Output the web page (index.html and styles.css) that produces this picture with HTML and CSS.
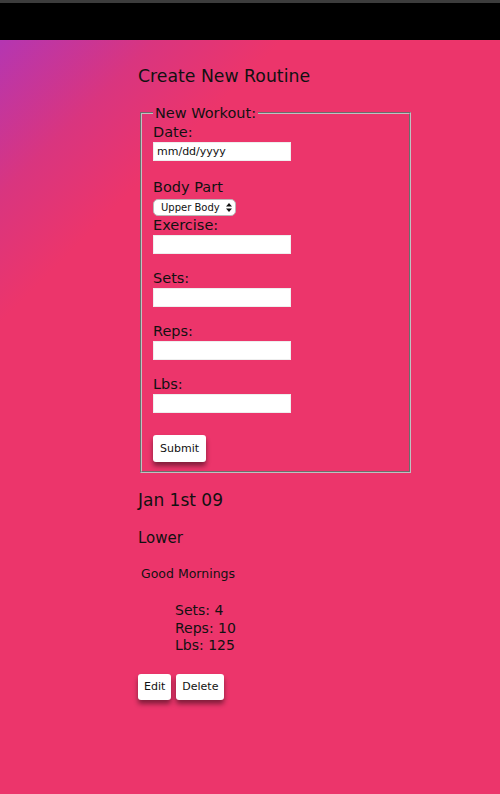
FILE: index.html
```html
<!DOCTYPE html>
<html>
<head>
<meta charset="utf-8">
<link rel="stylesheet" href="styles.css">
</head>
<body>
<div class="topbar"></div>
<main class="page">
  <div class="content">
    <h1 class="title">Create New Routine</h1>
    <form class="form">
      <fieldset class="box">
        <legend class="legend">New Workout:</legend>
        <div class="field field-first">
          <label class="label">Date:</label>
          <input class="input" type="text" placeholder="mm/dd/yyyy">
        </div>
        <div class="field field-tight">
          <label class="label">Body Part</label>
          <div class="select-wrap">
            <select class="select"><option>Upper Body</option><option>Lower Body</option></select>
            <svg class="select-arrows" width="6" height="9" viewBox="0 0 6 9"><path d="M3 0 L6 3.5 L0 3.5 Z M3 9 L6 5.5 L0 5.5 Z" fill="#111"/></svg>
          </div>
        </div>
        <div class="field">
          <label class="label">Exercise:</label>
          <input class="input" type="text">
        </div>
        <div class="field">
          <label class="label">Sets:</label>
          <input class="input" type="text">
        </div>
        <div class="field">
          <label class="label">Reps:</label>
          <input class="input" type="text">
        </div>
        <div class="field field-last">
          <label class="label">Lbs:</label>
          <input class="input" type="text">
        </div>
        <button class="btn btn-submit" type="button">Submit</button>
      </fieldset>
    </form>
    <section class="entry">
      <h2 class="date">Jan 1st 09</h2>
      <h3 class="part">Lower</h3>
      <h4 class="exercise">Good Mornings</h4>
      <ul class="stats">
        <li>Sets: 4</li>
        <li>Reps: 10</li>
        <li>Lbs: 125</li>
      </ul>
      <div class="actions">
        <button class="btn btn-sm" type="button">Edit</button>
        <button class="btn btn-sm" type="button">Delete</button>
      </div>
    </section>
  </div>
</main>
</body>
</html>
```
FILE: styles.css
```css
html, body {
  margin: 0;
  padding: 0;
}
body {
  background: #ec356b;
  color: #111;
  font-family: "DejaVu Sans", "Noto Sans", sans-serif;
}
.topbar {
  height: 37px;
  background: #000;
  border-top: 3px solid #3c3c3c;
}
.page {
  min-height: 754px;
  background: linear-gradient(135deg, #b436b2 0px, #d9357f 110px, #ec356b 200px, #ec356b 100%);
}
.content {
  padding: 25px 0 40px 138px;
}
.title {
  margin: 0;
  font-size: 17.3px;
  font-weight: 400;
  line-height: 22px;
}
.form {
  margin: 17px 0 0 0;
}
.box {
  width: 245px;
  margin: 0 2px;
  padding: 2px 11px 9px 11px;
  border: 2px groove #c0c0c0;
}
.legend {
  padding: 0 2px;
  font-size: 14.5px;
  line-height: 18px;
}
.field {
  display: flex;
  flex-direction: column;
  align-items: flex-start;
  margin-bottom: 16px;
}
.field-first {
  margin-bottom: 18px;
}
.field-tight {
  margin-bottom: 0;
}
.field-last {
  margin-bottom: 22px;
}
.label {
  font-size: 14.5px;
  line-height: 17px;
  margin-bottom: 1px;
}
.field-tight .label {
  margin-bottom: 3px;
}
.input {
  box-sizing: border-box;
  width: 138px;
  height: 19px;
  margin: 0;
  padding: 0 3px;
  border: 1px solid #eee;
  background: #fff;
  font-family: "DejaVu Sans", sans-serif;
  font-size: 11px;
  color: #111;
}
.input::placeholder {
  color: #111;
}
.select-wrap {
  position: relative;
  display: inline-flex;
  margin-bottom: 1px;
}
.select {
  appearance: none;
  -webkit-appearance: none;
  box-sizing: border-box;
  width: 83px;
  height: 17px;
  margin: 0;
  padding: 0 0 0 7px;
  border: 1px solid #b9b9b9;
  border-radius: 5px;
  background: #fff;
  font-family: "DejaVu Sans", sans-serif;
  font-size: 10px;
  color: #111;
}
.select-arrows {
  position: absolute;
  right: 4px;
  top: 4px;
  pointer-events: none;
}
.btn {
  border: none;
  background: #fff;
  border-radius: 3px;
  box-shadow: 0 4px 5px rgba(0, 0, 0, 0.45);
  font-family: "DejaVu Sans", sans-serif;
  font-size: 11px;
  color: #111;
  cursor: pointer;
}
.btn-submit {
  width: 53px;
  height: 27px;
  padding: 0;
}
.entry {
  margin-top: 15px;
}
.date {
  margin: 0;
  font-size: 17px;
  font-weight: 400;
  line-height: 24px;
}
.part {
  margin: 16px 0 0 0;
  font-size: 15px;
  font-weight: 400;
  line-height: 20px;
}
.exercise {
  margin: 17px 0 0 3px;
  font-size: 12.5px;
  font-weight: 400;
  line-height: 18px;
}
.stats {
  list-style: none;
  margin: 19px 0 0 0;
  padding: 0 0 0 37px;
  font-size: 14px;
  line-height: 17.5px;
}
.actions {
  display: flex;
  gap: 5px;
  margin-top: 19px;
}
.btn-sm {
  height: 26px;
  padding: 0 6px;
  font-size: 11px;
}
```
